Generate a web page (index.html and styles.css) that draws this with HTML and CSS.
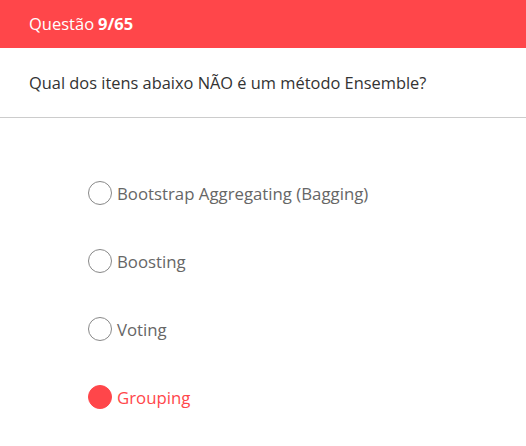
FILE: index.html
```html
<!DOCTYPE html>
<html lang="pt">
<head>
<meta charset="utf-8">
<link rel="stylesheet" href="styles.css">
</head>
<body>
<header class="bar">Questão <b>9/65</b></header>
<div class="question">Qual dos itens abaixo NÃO é um método Ensemble?</div>
<ul class="options">
  <li class="option"><span class="radio"></span><span>Bootstrap Aggregating (Bagging)</span></li>
  <li class="option"><span class="radio"></span><span>Boosting</span></li>
  <li class="option"><span class="radio"></span><span>Voting</span></li>
  <li class="option selected"><span class="radio"></span><span>Grouping</span></li>
</ul>
</body>
</html>
```
FILE: styles.css
```css
* { box-sizing: border-box; }
html, body { margin: 0; padding: 0; background: #fff; }
body { font-family: "Open Sans", sans-serif; width: 526px; height: 446px; overflow: hidden; }
.bar {
  height: 48px;
  background: #ff464a;
  color: #fff;
  font-size: 16.5px;
  padding: 0 29px 2px;
  display: flex;
  align-items: center;
}
.bar b { font-weight: 700; margin-left: 4px; }
.question {
  height: 70px;
  display: flex;
  align-items: center;
  padding: 0 29px;
  font-size: 16.4px;
  color: #333;
  border-bottom: 1px solid #ccc;
}
.options {
  list-style: none;
  margin: 0;
  padding: 63px 0 0 88px;
  display: flex;
  flex-direction: column;
  gap: 44px;
}
.option {
  display: flex;
  align-items: center;
  gap: 5px;
  height: 24px;
  font-size: 16.8px;
  color: #666;
}
.radio {
  width: 24px;
  height: 24px;
  border-radius: 50%;
  border: 1px solid #888;
  flex: none;
}
.selected { color: #ff464a; }
.selected .radio { background: #ff464a; border-color: #ff464a; }
```
